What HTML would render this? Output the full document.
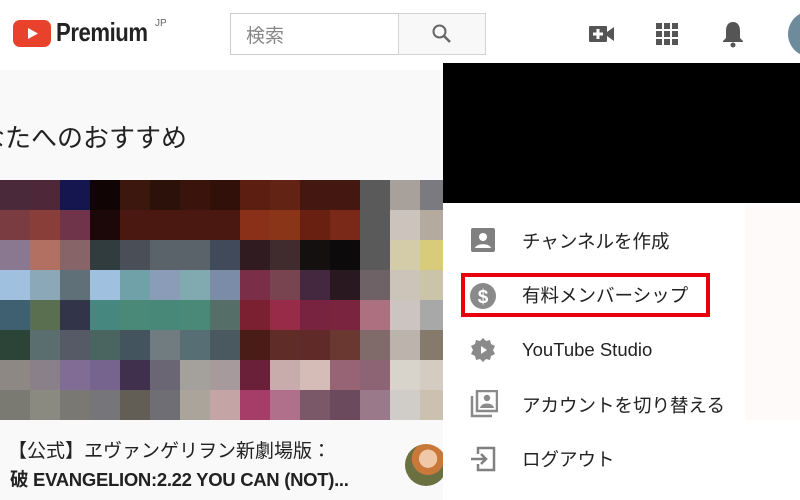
<!DOCTYPE html>
<html><head><meta charset="utf-8"><style>
*{margin:0;padding:0;box-sizing:border-box}
body{width:800px;height:500px;overflow:hidden;background:#f9f9f9;position:relative;font-family:"Liberation Sans","Noto Sans CJK JP",sans-serif}
.hdr{position:absolute;left:0;top:0;width:800px;height:70px;background:#fff}
.abs{position:absolute}
.mos{position:absolute;left:0;top:180px;width:450px;height:240px;display:grid;grid-template-columns:repeat(15,30px);grid-template-rows:repeat(8,30px)}
.panel{position:absolute;left:443px;top:203px;width:357px;height:297px;background:#fff}
.item{position:absolute;left:79px;font-size:18.5px;color:#222}
</style></head><body>
<div class="hdr"></div>
<svg class="abs" style="left:13px;top:20px" width="38" height="27" viewBox="0 0 38 27"><rect width="38" height="27" rx="7" fill="#e8412c"/><path d="M15 8 L25 13.5 L15 19Z" fill="#fff"/></svg>
<div class="abs" style="left:56px;top:17px;font-size:26px;font-weight:bold;color:#222;transform:scaleX(0.85);transform-origin:left;letter-spacing:-0.5px">Premium</div>
<div class="abs" style="left:155px;top:18px;font-size:10px;color:#666">JP</div>
<div class="abs" style="left:230px;top:13px;width:169px;height:42px;border:1px solid #ccc;background:#fff"></div>
<div class="abs" style="left:246px;top:21px;font-size:19px;color:#888">検索</div>
<div class="abs" style="left:398px;top:13px;width:88px;height:42px;border:1px solid #d3d3d3;background:#f8f8f8"></div>
<svg class="abs" style="left:431px;top:23px" width="22" height="22" viewBox="0 0 22 22"><circle cx="8.5" cy="8.5" r="6" fill="none" stroke="#666" stroke-width="2"/><path d="M13 13 L19 19" stroke="#666" stroke-width="2.5"/></svg>
<svg class="abs" style="left:588px;top:23px" width="28" height="22" viewBox="0 0 28 22"><rect x="1" y="3" width="18" height="16" rx="1" fill="#555"/><path d="M19 9 L26 4 V18 L19 13Z" fill="#555"/><path d="M10 6 V16 M5 11 H15" stroke="#fff" stroke-width="3"/></svg>
<svg class="abs" style="left:655px;top:22px" width="24" height="24" viewBox="0 0 24 24" fill="#555"><rect x="1" y="1" width="6" height="6"/><rect x="9" y="1" width="6" height="6"/><rect x="17" y="1" width="6" height="6"/><rect x="1" y="9" width="6" height="6"/><rect x="9" y="9" width="6" height="6"/><rect x="17" y="9" width="6" height="6"/><rect x="1" y="17" width="6" height="6"/><rect x="9" y="17" width="6" height="6"/><rect x="17" y="17" width="6" height="6"/></svg>
<svg class="abs" style="left:720px;top:20px" width="26" height="28" viewBox="0 0 26 28" fill="#555"><path d="M13 2 C8 2 6 6 6 11 V18 L3 21 V22 H23 V21 L20 18 V11 C20 6 18 2 13 2Z"/><circle cx="13" cy="25" r="2.5"/></svg>
<div class="abs" style="left:788px;top:11px;width:46px;height:46px;border-radius:50%;background:#6e8b9c"></div>
<div class="abs" style="left:-21px;top:118px;font-size:26px;color:#222">なたへのおすすめ</div>
<div class="mos">
<div style="background:#4a2a3a"></div><div style="background:#4e2838"></div><div style="background:#151550"></div><div style="background:#100404"></div><div style="background:#3c170e"></div><div style="background:#2c100a"></div><div style="background:#3a140c"></div><div style="background:#301008"></div><div style="background:#5c1e10"></div><div style="background:#622214"></div><div style="background:#441810"></div><div style="background:#441810"></div><div style="background:#5a5a5a"></div><div style="background:#a8a09a"></div><div style="background:#7a7a80"></div>
<div style="background:#7a3c40"></div><div style="background:#8a3e3a"></div><div style="background:#70344a"></div><div style="background:#1c0808"></div><div style="background:#4a1810"></div><div style="background:#4a1810"></div><div style="background:#4a1810"></div><div style="background:#4a1810"></div><div style="background:#8a3018"></div><div style="background:#8a3418"></div><div style="background:#6a2010"></div><div style="background:#7a2818"></div><div style="background:#5a5a5a"></div><div style="background:#ccc4bc"></div><div style="background:#b4aa9e"></div>
<div style="background:#8a7890"></div><div style="background:#b27062"></div><div style="background:#866468"></div><div style="background:#303c3e"></div><div style="background:#4a4e56"></div><div style="background:#5a626a"></div><div style="background:#5a626a"></div><div style="background:#404a5a"></div><div style="background:#301c20"></div><div style="background:#402c2e"></div><div style="background:#141010"></div><div style="background:#0c0a0a"></div><div style="background:#5a5a5a"></div><div style="background:#d4cca8"></div><div style="background:#d8cc7a"></div>
<div style="background:#a0c0e0"></div><div style="background:#8aa8b8"></div><div style="background:#607078"></div><div style="background:#a0c0e0"></div><div style="background:#70a0a8"></div><div style="background:#8a9cb8"></div><div style="background:#80aab0"></div><div style="background:#7a8ca8"></div><div style="background:#7a2e48"></div><div style="background:#784450"></div><div style="background:#442840"></div><div style="background:#2a1820"></div><div style="background:#6e6266"></div><div style="background:#ccc4b8"></div><div style="background:#ccc4a8"></div>
<div style="background:#3e6070"></div><div style="background:#5a6e50"></div><div style="background:#32344a"></div><div style="background:#468880"></div><div style="background:#4a8878"></div><div style="background:#488878"></div><div style="background:#4a8878"></div><div style="background:#566e68"></div><div style="background:#7a2030"></div><div style="background:#982c48"></div><div style="background:#782440"></div><div style="background:#7a2440"></div><div style="background:#ac7080"></div><div style="background:#ccc4c0"></div><div style="background:#a8a8a8"></div>
<div style="background:#2c4438"></div><div style="background:#5a6e70"></div><div style="background:#565a66"></div><div style="background:#4a6460"></div><div style="background:#44545e"></div><div style="background:#707c80"></div><div style="background:#566e74"></div><div style="background:#4a5860"></div><div style="background:#4a1c18"></div><div style="background:#602c28"></div><div style="background:#602a28"></div><div style="background:#6a3830"></div><div style="background:#806a6a"></div><div style="background:#bcb4ac"></div><div style="background:#867a6c"></div>
<div style="background:#8e8884"></div><div style="background:#8a808a"></div><div style="background:#806c94"></div><div style="background:#76648e"></div><div style="background:#40304e"></div><div style="background:#6a6674"></div><div style="background:#a4a09c"></div><div style="background:#a69a9c"></div><div style="background:#6a2038"></div><div style="background:#c8acac"></div><div style="background:#d6bcb6"></div><div style="background:#966474"></div><div style="background:#8c6474"></div><div style="background:#d8d4cc"></div><div style="background:#d4ccc0"></div>
<div style="background:#7a7a72"></div><div style="background:#8a8a80"></div><div style="background:#7a7872"></div><div style="background:#76767a"></div><div style="background:#625e56"></div><div style="background:#6e6e74"></div><div style="background:#aaa49a"></div><div style="background:#c4a4a4"></div><div style="background:#a63c68"></div><div style="background:#b0708c"></div><div style="background:#7a5868"></div><div style="background:#6a4a5c"></div><div style="background:#9a7a8a"></div><div style="background:#d0ccc8"></div><div style="background:#ccc0b0"></div>
</div>
<div class="abs" style="left:8px;top:436px;font-size:19px;color:#222">【公式】ヱヴァンゲリヲン新劇場版：</div>
<div class="abs" style="left:10px;top:466px;font-size:18.5px;font-weight:bold;color:#222;letter-spacing:-0.3px">破 EVANGELION:2.22 YOU CAN (NOT)...</div>
<div class="abs" style="left:405px;top:444px;width:42px;height:42px;border-radius:50%;background:radial-gradient(circle at 55% 35%,#f0c8a8 0 25%,#c87838 26% 45%,#6a7040 46% 100%)"></div>
<div class="abs" style="left:443px;top:63px;width:357px;height:141px;background:#000"></div>
<div class="panel">
<div class="abs" style="left:302px;top:2px;width:55px;height:215px;background:#fefaf9"></div>
<svg class="abs" style="left:28px;top:25px" width="24" height="24" viewBox="0 0 24 24"><rect x="0" y="0" width="24" height="24" rx="2" fill="#808080"/><circle cx="12" cy="9" r="4" fill="#fff"/><path d="M4 20 C5 15 19 15 20 20Z" fill="#fff"/></svg>
<div class="item" style="top:25px">チャンネルを作成</div>
<div class="abs" style="left:18px;top:70px;width:249px;height:44px;border:4px solid #e8000f"></div>
<svg class="abs" style="left:27px;top:80px" width="26" height="26" viewBox="0 0 26 26"><circle cx="13" cy="13" r="13" fill="#8a8a8a"/><text x="13" y="20" font-size="19" font-weight="bold" fill="#fff" text-anchor="middle" font-family="Liberation Sans">$</text></svg>
<div class="item" style="top:79px">有料メンバーシップ</div>
<svg class="abs" style="left:27px;top:134px" width="26" height="26" viewBox="0 0 26 26"><path d="M13 1 L16 4 L20 3 L21 7 L25 9 L23 13 L25 17 L21 19 L20 23 L16 22 L13 25 L10 22 L6 23 L5 19 L1 17 L3 13 L1 9 L5 7 L6 3 L10 4Z" fill="#8a8a8a"/><path d="M11 9 L17 13 L11 17Z" fill="#fff"/></svg>
<div class="item" style="top:136px">YouTube Studio</div>
<svg class="abs" style="left:27px;top:187px" width="28" height="28" viewBox="0 0 28 28"><path d="M2 6 V26 H22" fill="none" stroke="#8a8a8a" stroke-width="2.5"/><rect x="7" y="1" width="20" height="20" fill="none" stroke="#8a8a8a" stroke-width="2.5"/><circle cx="17" cy="8" r="3.2" fill="#8a8a8a"/><path d="M10 18 C11 12 23 12 24 18Z" fill="#8a8a8a"/></svg>
<div class="item" style="top:189px">アカウントを切り替える</div>
<svg class="abs" style="left:27px;top:243px" width="26" height="26" viewBox="0 0 26 26"><path d="M8 8 V2 H24 V24 H8 V18" fill="none" stroke="#808080" stroke-width="2.5"/><path d="M1 13 H16 M11 8 L16 13 L11 18" fill="none" stroke="#808080" stroke-width="2.5"/></svg>
<div class="item" style="top:243px">ログアウト</div>
</div>
</body></html>
